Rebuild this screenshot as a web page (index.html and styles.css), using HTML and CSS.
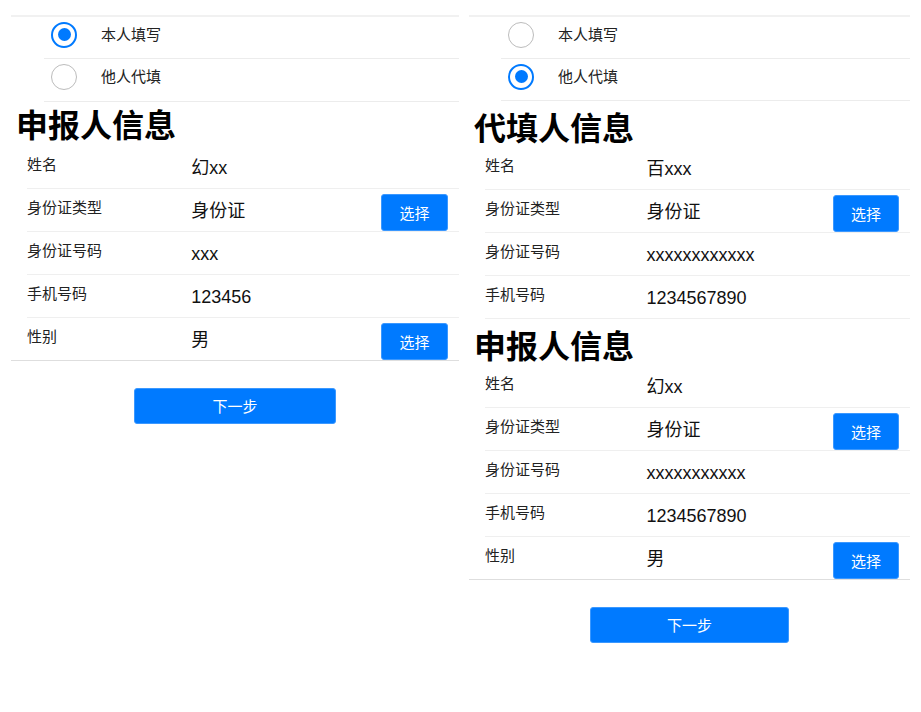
FILE: index.html
```html
<!DOCTYPE html>
<html lang="zh-CN">
<head>
<meta charset="utf-8">
<title>信息填写</title>
<link rel="stylesheet" href="styles.css">
</head>
<body>
<div class="screens">
  <section class="panel panel--left">
    <div class="radios">
      <label class="radio-item"><span class="radio radio--on"></span><span class="radio-text">本人填写</span></label>
      <label class="radio-item"><span class="radio"></span><span class="radio-text">他人代填</span></label>
    </div>
    <h1 class="title">申报人信息</h1>
    <div class="form form--closed">
      <div class="row"><span class="label">姓名</span><span class="value">幻xx</span></div>
      <div class="row"><span class="label">身份证类型</span><span class="value">身份证</span><button class="pick">选择</button></div>
      <div class="row"><span class="label">身份证号码</span><span class="value">xxx</span></div>
      <div class="row"><span class="label">手机号码</span><span class="value">123456</span></div>
      <div class="row"><span class="label">性别</span><span class="value">男</span><button class="pick">选择</button></div>
    </div>
    <button class="next">下一步</button>
  </section>

  <section class="panel panel--right">
    <div class="radios">
      <label class="radio-item"><span class="radio"></span><span class="radio-text">本人填写</span></label>
      <label class="radio-item"><span class="radio radio--on"></span><span class="radio-text">他人代填</span></label>
    </div>
    <h1 class="title title--spaced">代填人信息</h1>
    <div class="form">
      <div class="row"><span class="label">姓名</span><span class="value">百xxx</span></div>
      <div class="row"><span class="label">身份证类型</span><span class="value">身份证</span><button class="pick">选择</button></div>
      <div class="row"><span class="label">身份证号码</span><span class="value">xxxxxxxxxxxx</span></div>
      <div class="row"><span class="label">手机号码</span><span class="value">1234567890</span></div>
    </div>
    <h1 class="title title--spaced">申报人信息</h1>
    <div class="form form--closed">
      <div class="row"><span class="label">姓名</span><span class="value">幻xx</span></div>
      <div class="row"><span class="label">身份证类型</span><span class="value">身份证</span><button class="pick">选择</button></div>
      <div class="row"><span class="label">身份证号码</span><span class="value">xxxxxxxxxxx</span></div>
      <div class="row"><span class="label">手机号码</span><span class="value">1234567890</span></div>
      <div class="row"><span class="label">性别</span><span class="value">男</span><button class="pick">选择</button></div>
    </div>
    <button class="next">下一步</button>
  </section>
</div>
</body>
</html>
```
FILE: styles.css
```css
* { box-sizing: border-box; }

html, body {
  margin: 0;
  padding: 0;
  background: #ffffff;
}

body {
  font-family: "Liberation Sans", "Noto Sans CJK SC", Arial, sans-serif;
  color: #111;
}

.screens {
  display: grid;
  grid-template-columns: 448px 441px;
  column-gap: 10px;
  padding: 15px 0 0 11px;
  align-items: start;
}

.panel {
  border-top: 2px solid #f1f1f1;
  display: flex;
  flex-direction: column;
}

.radios {
  display: flex;
  flex-direction: column;
}

.panel--left .radios { padding-left: 33px; }
.panel--right .radios { padding-left: 32px; }

.radio-item {
  display: flex;
  align-items: center;
  height: 42px;
  padding-bottom: 6px;
  border-bottom: 1px solid #ececec;
}

.panel--left .radio-item:last-child { height: 43px; }

.radio {
  flex: 0 0 auto;
  width: 26px;
  height: 26px;
  margin-left: 7px;
  border-radius: 50%;
  border: 1.5px solid #bcbcbc;
  background: #fff;
  display: flex;
  align-items: center;
  justify-content: center;
}

.radio--on {
  border: 2px solid #007aff;
}

.radio--on::after {
  content: "";
  width: 13px;
  height: 13px;
  border-radius: 50%;
  background: #007aff;
}

.radio-text {
  margin-left: 24px;
  font-size: 15px;
  color: #222;
  line-height: 20px;
}

.title {
  margin: 0;
  padding: 1px 0 3px 5px;
  font-family: "Noto Sans CJK SC", sans-serif;
  font-size: 32px;
  font-weight: 700;
  line-height: 40px;
  color: #000;
}

.title--spaced {
  padding-top: 5px;
  padding-bottom: 1px;
}

.form {
  display: flex;
  flex-direction: column;
}

.form--closed {
  border-bottom: 1px solid #dedede;
}

.row {
  display: flex;
  align-items: center;
  height: 43px;
  margin-left: 16px;
  padding-right: 11px;
  border-bottom: 1px solid #efefef;
}

.form--closed .row:last-child {
  border-bottom: none;
  height: 42px;
}

.label {
  flex: 0 0 39%;
  font-size: 15px;
  line-height: 20px;
  margin-top: -4px;
  color: #222;
}

.value {
  flex: 1 1 auto;
  font-size: 18px;
  line-height: 24px;
  margin-top: 1px;
  color: #111;
}

.pick {
  align-self: flex-end;
  flex: 0 0 auto;
  width: 67px;
  height: 37px;
  padding: 0;
  border: 1px solid #3b98ff;
  border-radius: 3px;
  background: #007aff;
  color: #fff;
  font-family: "Noto Sans CJK SC", sans-serif;
  font-size: 15px;
  line-height: 20px;
}

.panel--right .pick { width: 66px; }

.next {
  align-self: center;
  width: 45%;
  height: 36px;
  margin-top: 27px;
  padding: 0;
  border: 1px solid #3b98ff;
  border-radius: 3px;
  background: #007aff;
  color: #fff;
  font-family: "Noto Sans CJK SC", sans-serif;
  font-size: 15px;
  line-height: 20px;
}
```
